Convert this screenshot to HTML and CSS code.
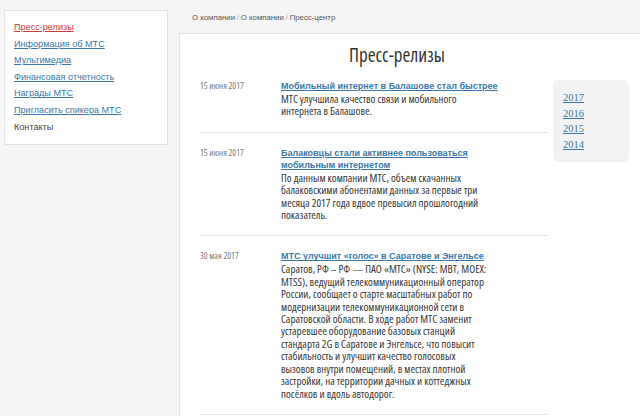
FILE: index.html
```html
<!DOCTYPE html>
<html lang="ru">
<head>
    <meta charset="UTF-8">
    <title>Пресс-релизы</title>
    <link rel="stylesheet" href="styles.css">
</head>
<body>
    <div class="page">
        <div class="sidebar">
            <ul class="side-nav">
                <li><a class="active" href="#">Пресс-релизы</a></li>
                <li><a href="#">Информация об МТС</a></li>
                <li><a href="#">Мультимедиа</a></li>
                <li><a href="#">Финансовая отчетность</a></li>
                <li><a href="#">Награды МТС</a></li>
                <li><a href="#">Пригласить спикера МТС</a></li>
                <li><span class="plain">Контакты</span></li>
            </ul>
        </div>

        <div class="main">
            <div class="breadcrumbs">
                <a href="#">О компании</a><span class="sep">/</span><a href="#">О компании</a><span class="sep">/</span><span>Пресс-центр</span>
            </div>

            <div class="panel">
                <h1>Пресс-релизы</h1>
                <div class="columns">
                    <div class="news-list">
                        <div class="news-item">
                            <div class="news-date">15 июня 2017</div>
                            <div class="news-body">
                                <a class="news-title" href="#">Мобильный интернет в Балашове стал быстрее</a>
                                <p>МТС улучшила качество связи и мобильного интернета в Балашове.</p>
                            </div>
                        </div>
                        <div class="news-item">
                            <div class="news-date">15 июня 2017</div>
                            <div class="news-body">
                                <a class="news-title" href="#">Балаковцы стали активнее пользоваться мобильным интернетом</a>
                                <p>По данным компании МТС, объем скачанных балаковскими абонентами данных за первые три месяца 2017 года вдвое превысил прошлогодний показатель.</p>
                            </div>
                        </div>
                        <div class="news-item">
                            <div class="news-date">30 мая 2017</div>
                            <div class="news-body">
                                <a class="news-title" href="#">МТС улучшит «голос» в Саратове и Энгельсе</a>
                                <p>Саратов, РФ – РФ — ПАО «МТС» (NYSE: MBT, MOEX: MTSS), ведущий телекоммуникационный оператор России, сообщает о старте масштабных работ по модернизации телекоммуникационной сети в Саратовской области. В ходе работ МТС заменит устаревшее оборудование базовых станций стандарта 2G в Саратове и Энгельсе, что повысит стабильность и улучшит качество голосовых вызовов внутри помещений, в местах плотной застройки, на территории дачных и коттеджных посёлков и вдоль автодорог.</p>
                            </div>
                        </div>
                    </div>

                    <div class="years">
                        <a href="#">2017</a>
                        <a href="#">2016</a>
                        <a href="#">2015</a>
                        <a href="#">2014</a>
                    </div>
                </div>
            </div>
        </div>
    </div>
</body>
</html>
```

FILE: styles.css
```css
:root {
    --page-bg: #f5f5f5;
    --line-color: #e4e4e4;
    --link-color: #3a77a8;
    --text-color: #363636;
    --muted-color: #7a7a7a;
}

* {
    margin: 0;
    padding: 0;
    box-sizing: border-box;
}

body {
    background-color: var(--page-bg);
    font-family: "Liberation Sans", Arial, sans-serif;
    color: var(--text-color);
    overflow: hidden;
}

.page {
    display: flex;
    align-items: flex-start;
    padding: 10px 0 0 4px;
}

/* left menu */
.sidebar {
    width: 164px;
    flex-shrink: 0;
    background-color: white;
    border: 1px solid #e2e2e2;
    padding: 8px 9px 9px;
}

.side-nav {
    list-style: none;
}

.side-nav li {
    font-size: 9.1px;
    line-height: 16.6px;
}

.side-nav a {
    color: var(--link-color);
    text-decoration: underline;
}

.side-nav a.active {
    color: #d23a3c;
}

.side-nav .plain {
    color: #444;
}

/* main part */
.main {
    flex: 1;
    margin-left: 11px;
    margin-top: -10px;
}

.breadcrumbs {
    height: 33px;
    padding: 13px 0 0 13px;
    font-size: 7.8px;
    color: #555;
}

.breadcrumbs a {
    color: #555;
    text-decoration: none;
}

.breadcrumbs .sep {
    margin: 0 2px;
    font-size: 6.5px;
    font-style: italic;
    color: #999;
}

.panel {
    background-color: white;
    border-top: 1px solid var(--line-color);
    border-left: 1px solid var(--line-color);
    min-height: 400px;
    padding: 8px 0 0 20px;
}

h1 {
    font-family: "Open Sans", "Noto Sans", sans-serif;
    font-stretch: 87%;
    font-weight: 400;
    font-size: 19px;
    line-height: 26px;
    color: #333;
    text-align: center;
    padding-right: 46px;
    margin-bottom: 12px;
}

.columns {
    display: flex;
    align-items: flex-start;
    gap: 5px;
}

.news-list {
    width: 348px;
}

.news-item {
    display: flex;
    padding: 14px 0 14px;
    border-bottom: 1px solid var(--line-color);
}

.news-item:first-child {
    padding-top: 0;
}

.news-date {
    width: 81px;
    flex-shrink: 0;
    font-family: "Open Sans", sans-serif;
    font-stretch: 87%;
    font-size: 9px;
    line-height: 12px;
    color: var(--muted-color);
}

.news-body {
    width: 222px;
}

.news-title {
    display: block;
    margin-bottom: 1px;
    font-weight: bold;
    font-size: 9px;
    line-height: 12px;
    color: var(--link-color);
    text-decoration: underline;
}

.news-body p {
    width: 210px;
    font-family: "Open Sans", "Noto Sans", sans-serif;
    font-stretch: 87%;
    font-size: 11px;
    line-height: 12.4px;
    color: var(--text-color);
}

/* archive by year */
.years {
    width: 76px;
    background-color: #f2f2f2;
    border-radius: 6px;
    padding: 10px;
    display: flex;
    flex-direction: column;
}

.years a {
    font-family: "Liberation Serif", serif;
    font-size: 10.5px;
    line-height: 15.5px;
    color: var(--link-color);
    text-decoration: underline;
}
```
